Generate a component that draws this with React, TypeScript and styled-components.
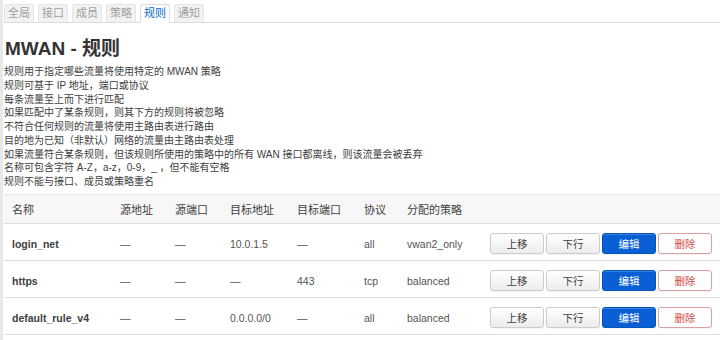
import React from "react"
import styled, { createGlobalStyle } from "styled-components"

const GlobalStyle = createGlobalStyle`
  html, body {
    margin: 0;
    padding: 0;
    background: #fff;
  }
  body {
    font-family: "Liberation Sans", "Noto Sans CJK SC", sans-serif;
    color: #404040;
    font-size: 11px;
  }
`

type Rule = {
  name: string
  srcIp: string
  srcPort: string
  destIp: string
  destPort: string
  proto: string
  policy: string
}

const tabs = ["全局", "接口", "成员", "策略", "规则", "通知"]

const notes = [
  "规则用于指定哪些流量将使用特定的 MWAN 策略",
  "规则可基于 IP 地址，端口或协议",
  "每条流量至上而下进行匹配",
  "如果匹配中了某条规则，则其下方的规则将被忽略",
  "不符合任何规则的流量将使用主路由表进行路由",
  "目的地为已知（非默认）网络的流量由主路由表处理",
  "如果流量符合某条规则，但该规则所使用的策略中的所有 WAN 接口都离线，则该流量会被丢弃",
  "名称可包含字符 A-Z，a-z，0-9，_ ，但不能有空格",
  "规则不能与接口、成员或策略重名",
]

const rules: Rule[] = [
  { name: "login_net", srcIp: "—", srcPort: "—", destIp: "10.0.1.5", destPort: "—", proto: "all", policy: "vwan2_only" },
  { name: "https", srcIp: "—", srcPort: "—", destIp: "—", destPort: "443", proto: "tcp", policy: "balanced" },
  { name: "default_rule_v4", srcIp: "—", srcPort: "—", destIp: "0.0.0.0/0", destPort: "—", proto: "all", policy: "balanced" },
]

const colWidths = [108, 55, 55, 67, 67, 43, 83]

export default function App() {
  return (
    <>
      <GlobalStyle />
      <Page>
        <TabBar>
          {tabs.map(t => (
            <Tab key={t} $active={t === "规则"}>{t}</Tab>
          ))}
        </TabBar>
        <Title>MWAN - 规则</Title>
        <Notes>
          {notes.map(n => (
            <Note key={n}>{n}</Note>
          ))}
        </Notes>
        <Table>
          <colgroup>
            {colWidths.map((w, i) => (
              <col key={i} style={{ width: w }} />
            ))}
            <col />
          </colgroup>
          <thead>
            <tr>
              <Th>名称</Th>
              <Th>源地址</Th>
              <Th>源端口</Th>
              <Th>目标地址</Th>
              <Th>目标端口</Th>
              <Th>协议</Th>
              <Th>分配的策略</Th>
              <Th />
            </tr>
          </thead>
          <tbody>
            {rules.map(r => (
              <Row key={r.name}>
                <NameCell>{r.name}</NameCell>
                <Td>{r.srcIp}</Td>
                <Td>{r.srcPort}</Td>
                <Td>{r.destIp}</Td>
                <Td>{r.destPort}</Td>
                <Td>{r.proto}</Td>
                <Td>{r.policy}</Td>
                <ActionCell>
                  <Actions>
                    <Button>上移</Button>
                    <Button>下行</Button>
                    <Button $variant="primary">编辑</Button>
                    <Button $variant="danger">删除</Button>
                  </Actions>
                </ActionCell>
              </Row>
            ))}
          </tbody>
        </Table>
      </Page>
    </>
  )
}

const Page = styled.div`
  width: 720px;
  height: 340px;
  box-sizing: border-box;
  border-left: 3px solid #e8e8e8;
  padding-left: 1px;
  overflow: hidden;
`

const TabBar = styled.ul`
  display: flex;
  gap: 4px;
  margin: 0;
  padding: 4px 0 0 0;
  list-style: none;
  border-bottom: 1px solid #dcdcdc;
  height: 18px;
`

const Tab = styled.li<{ $active?: boolean }>`
  box-sizing: border-box;
  height: 19px;
  padding: 0 3px;
  line-height: 17px;
  font-size: 11px;
  border: 1px solid ${p => (p.$active ? "#dcdcdc" : "#e6e6e6")};
  border-bottom-color: ${p => (p.$active ? "#fff" : "#dcdcdc")};
  border-radius: 3px 3px 0 0;
  background: ${p => (p.$active ? "#fff" : "#f2f2f2")};
  color: ${p => (p.$active ? "#0069d6" : "#a0a0a0")};
`

const Title = styled.h2`
  margin: 14px 0 4px 1px;
  font-size: 19px;
  line-height: 24px;
  font-weight: bold;
  color: #333333;
`

const Notes = styled.div`
  padding-bottom: 5px;
`

const Note = styled.div`
  font-size: 10px;
  line-height: 13.75px;
  white-space: nowrap;
  color: #404040;
`

const Table = styled.table`
  width: 716px;
  border-collapse: collapse;
  table-layout: fixed;
`

const Th = styled.th`
  height: 28px;
  padding: 0 8px;
  text-align: left;
  font-weight: normal;
  font-size: 11px;
  color: #404040;
  background: #f7f7f7;
  border-top: 1px solid #e6e6e6;
  border-bottom: 1px solid #dddddd;
  white-space: nowrap;
`

const Row = styled.tr`
  border-bottom: 1px solid #dddddd;
`

const Td = styled.td`
  height: 32px;
  padding: 4px 8px 0 8px;
  font-size: 10.5px;
  color: #555;
  white-space: nowrap;
`

const NameCell = styled(Td)`
  font-weight: bold;
  color: #404040;
`

const ActionCell = styled(Td)`
  padding-left: 8px;
`

const Actions = styled.div`
  display: flex;
  gap: 2px;
`

const Button = styled.button<{ $variant?: "primary" | "danger" }>`
  box-sizing: border-box;
  width: 54px;
  height: 21px;
  padding: 0;
  font-family: inherit;
  font-size: 10.5px;
  border-radius: 3px;
  border: 1px solid
    ${p => (p.$variant === "primary" ? "#0057b8" : p.$variant === "danger" ? "#d9a0a0" : "#cccccc")};
  background: ${p =>
    p.$variant === "primary"
      ? "#0a5fd4"
      : p.$variant === "danger"
      ? "#ffffff"
      : "linear-gradient(#ffffff, #ececec)"};
  color: ${p => (p.$variant === "primary" ? "#ffffff" : p.$variant === "danger" ? "#d04a4a" : "#404040")};
  box-shadow: inset 0 1px 0 rgba(255, 255, 255, 0.2), 0 1px 1px rgba(0, 0, 0, 0.05);
`
